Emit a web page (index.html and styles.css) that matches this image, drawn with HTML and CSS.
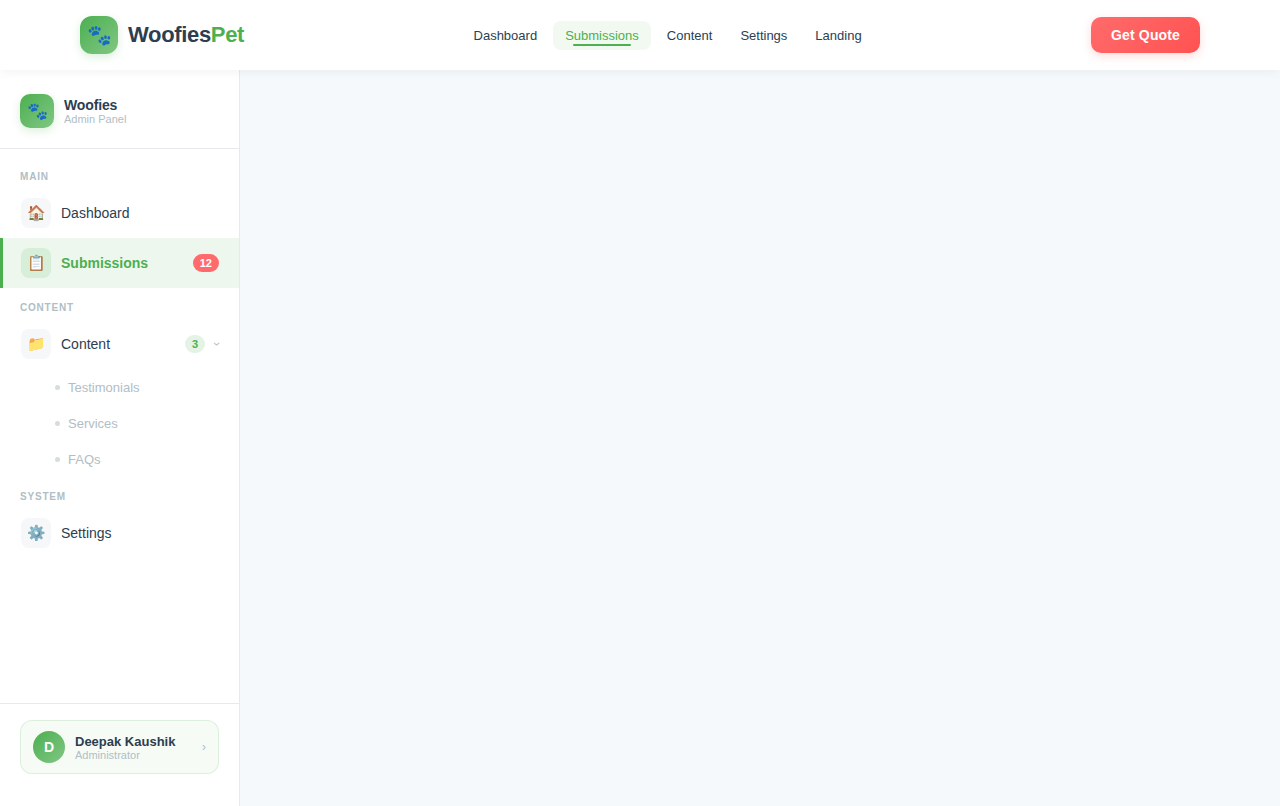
FILE: index.html
```html
<!DOCTYPE html>
<html lang="en">
<head>
    <meta charset="UTF-8">
    <meta name="viewport" content="width=device-width, initial-scale=1.0">
    <title>WoofiesPet Admin</title>
    <link rel="stylesheet" href="styles.css">
</head>
<body>

<header class="topbar">
    <div class="topbar-inner">
        <a href="#" class="logo">
            <span class="logo-icon">🐾</span>
            <span class="logo-text">Woofies<span>Pet</span></span>
        </a>
        <nav class="topnav">
            <a href="#">Dashboard</a>
            <a href="#" class="active">Submissions</a>
            <a href="#">Content</a>
            <a href="#">Settings</a>
            <a href="#">Landing</a>
        </nav>
        <button type="button" class="quote-btn">Get Quote</button>
    </div>
</header>

<div class="layout">
    <aside class="sidebar">
        <div class="sidebar-header">
            <div class="brand-icon">🐾</div>
            <div>
                <div class="brand-name">Woofies</div>
                <div class="brand-sub">Admin Panel</div>
            </div>
        </div>

        <nav class="menu">
            <div class="menu-label">Main</div>
            <a href="#" class="menu-item">
                <span class="menu-icon">🏠</span>
                <span class="menu-text">Dashboard</span>
            </a>
            <a href="#" class="menu-item active">
                <span class="menu-icon">📋</span>
                <span class="menu-text">Submissions</span>
                <span class="badge badge-red">12</span>
            </a>

            <div class="menu-label">Content</div>
            <button type="button" class="menu-item" id="content-toggle" aria-expanded="true">
                <span class="menu-icon">📁</span>
                <span class="menu-text">Content</span>
                <span class="badge badge-green">3</span>
                <span class="arrow">›</span>
            </button>
            <div class="submenu" id="content-menu">
                <a href="#">Testimonials</a>
                <a href="#">Services</a>
                <a href="#">FAQs</a>
            </div>

            <div class="menu-label">System</div>
            <a href="#" class="menu-item">
                <span class="menu-icon">⚙️</span>
                <span class="menu-text">Settings</span>
            </a>
        </nav>

        <div class="sidebar-footer">
            <a href="#" class="profile">
                <span class="avatar">D</span>
                <span class="profile-info">
                    <span class="profile-name">Deepak Kaushik</span>
                    <span class="profile-role">Administrator</span>
                </span>
                <span class="profile-arrow">›</span>
            </a>
        </div>
    </aside>

    <main class="content"></main>
</div>

<script>
    const toggle = document.getElementById("content-toggle");

    toggle.addEventListener("click", function () {
        const open = toggle.getAttribute("aria-expanded") === "true";
        toggle.setAttribute("aria-expanded", String(!open));
        document.getElementById("content-menu").hidden = open;
    });
</script>

</body>
</html>
```
FILE: styles.css
```css
* {
    box-sizing: border-box;
    margin: 0;
    padding: 0;
}
body {
    font-family: "Liberation Sans", Arial, sans-serif;
    background-color: #f5f9fc;
    color: #2c3e50;
    min-height: 100vh;
    display: flex;
    flex-direction: column;
}
a {
    color: inherit;
    text-decoration: none;
}
button {
    font-family: inherit;
    border: none;
    cursor: pointer;
}

/* Top bar */
.topbar {
    position: sticky;
    top: 0;
    z-index: 10;
    background-color: #fff;
    box-shadow: 0 2px 10px rgba(0, 0, 0, 0.05);
}
.topbar-inner {
    max-width: 1200px;
    height: 70px;
    margin: 0 auto;
    padding: 0 40px;
    display: flex;
    align-items: center;
    justify-content: space-between;
}
.logo {
    display: flex;
    align-items: center;
    gap: 10px;
}
.logo-icon,
.brand-icon {
    display: flex;
    align-items: center;
    justify-content: center;
    background: linear-gradient(135deg, #4caf50, #81c784);
    box-shadow: 0 3px 10px rgba(76, 175, 80, 0.2);
}
.logo-icon {
    width: 38px;
    height: 38px;
    border-radius: 12px;
    font-size: 20px;
}
.logo-text {
    font-size: 22px;
    font-weight: bold;
    letter-spacing: -0.015em;
}
.logo-text span {
    color: #4caf50;
}
.topnav {
    display: flex;
    gap: 4px;
}
.topnav a {
    position: relative;
    padding: 7px 12px;
    border-radius: 8px;
    font-size: 13px;
    line-height: 15px;
}
.topnav a.active {
    color: #4caf50;
    background-color: rgba(76, 175, 80, 0.08);
}
.topnav a.active::after {
    content: "";
    position: absolute;
    left: 20%;
    right: 20%;
    bottom: 4px;
    height: 2px;
    border-radius: 2px;
    background-color: #4caf50;
}
.quote-btn {
    padding: 10px 20px;
    border-radius: 10px;
    background: linear-gradient(135deg, #ff6b6b, #ff5252);
    box-shadow: 0 3px 10px rgba(255, 107, 107, 0.25);
    color: #fff;
    font-size: 14px;
    font-weight: bold;
    line-height: 16px;
    letter-spacing: 0.01em;
}

/* Sidebar */
.layout {
    flex: 1;
    display: flex;
}
.sidebar {
    width: 240px;
    display: flex;
    flex-direction: column;
    background-color: #fff;
    border-right: 1px solid #e6eaed;
}
.sidebar-header {
    display: flex;
    align-items: center;
    gap: 10px;
    padding: 24px 20px 20px;
    border-bottom: 1px solid #e6eaed;
}
.brand-icon {
    width: 34px;
    height: 34px;
    border-radius: 10px;
    font-size: 17px;
}
.brand-name {
    font-size: 14px;
    font-weight: bold;
    line-height: 16px;
    letter-spacing: -0.01em;
}
.brand-sub,
.profile-role {
    color: #b0bec5;
    font-size: 11px;
    line-height: 12px;
}
.menu {
    flex: 1;
    padding: 8px 0;
}
.menu-label {
    padding: 14px 20px 6px;
    color: #b0bec5;
    font-size: 10px;
    font-weight: bold;
    line-height: 11px;
    letter-spacing: 0.08em;
    text-transform: uppercase;
}
.menu-item {
    width: 100%;
    display: flex;
    align-items: center;
    gap: 10px;
    padding: 10px 20px 10px 18px;
    border-left: 3px solid transparent;
    background: none;
    color: #2c3e50;
    font-size: 14px;
    text-align: left;
}
.menu-item.active {
    border-left-color: #4caf50;
    background-color: rgba(76, 175, 80, 0.1);
    color: #4caf50;
    font-weight: bold;
}
.menu-icon {
    width: 30px;
    height: 30px;
    display: flex;
    align-items: center;
    justify-content: center;
    border-radius: 8px;
    background-color: #f5f7f9;
    font-size: 15px;
}
.menu-item.active .menu-icon {
    background-color: #d7eed8;
}
.menu-text {
    flex: 1;
}
.badge {
    padding: 3px 7px;
    border-radius: 10px;
    font-size: 11px;
    font-weight: bold;
    line-height: 12px;
}
.badge-red {
    background-color: #ff6b6b;
    color: #fff;
}
.badge-green {
    background-color: rgba(76, 175, 80, 0.15);
    color: #4caf50;
}
.arrow,
.profile-arrow {
    color: #b0bec5;
    font-size: 12px;
}
.menu-item[aria-expanded="true"] .arrow {
    transform: rotate(90deg);
}
.submenu a {
    display: flex;
    align-items: center;
    gap: 8px;
    padding: 11px 20px 10px 55px;
    color: #b0bec5;
    font-size: 13px;
    line-height: 15px;
}
.submenu a::before {
    content: "";
    width: 5px;
    height: 5px;
    border-radius: 50%;
    background-color: #d5dde0;
}

/* Logged in user */
.sidebar-footer {
    padding: 16px 20px 32px;
    border-top: 1px solid #e6eaed;
}
.profile {
    display: flex;
    align-items: center;
    gap: 10px;
    padding: 10px 12px;
    border: 1px solid rgba(76, 175, 80, 0.15);
    border-radius: 12px;
    background-color: rgba(76, 175, 80, 0.05);
}
.avatar {
    width: 32px;
    height: 32px;
    display: flex;
    align-items: center;
    justify-content: center;
    border-radius: 50%;
    background: linear-gradient(135deg, #4caf50, #81c784);
    color: #fff;
    font-size: 14px;
    font-weight: bold;
}
.profile-info {
    flex: 1;
    display: flex;
    flex-direction: column;
}
.profile-name {
    font-size: 13px;
    font-weight: bold;
    line-height: 15px;
}
.content {
    flex: 1;
}
```
